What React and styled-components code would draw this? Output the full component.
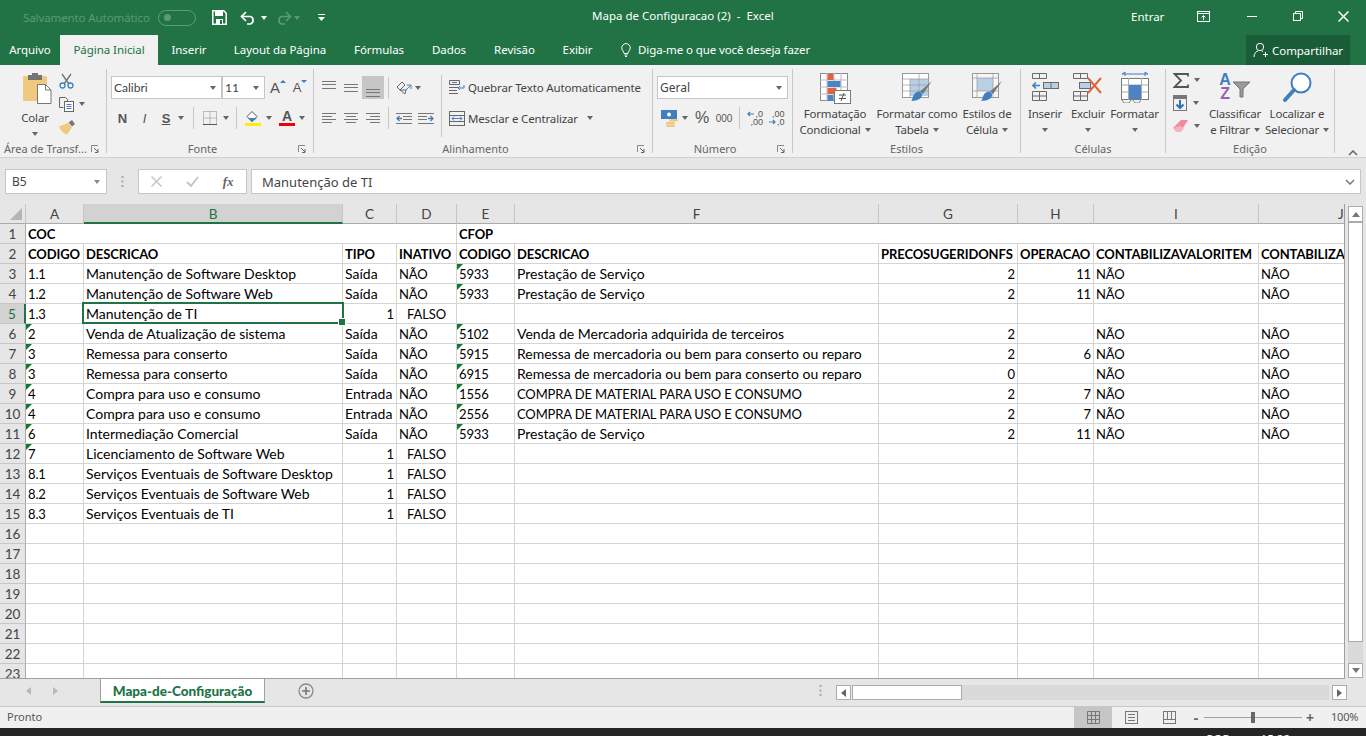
import React from 'react'
import styled, { createGlobalStyle } from 'styled-components'

const UI = '"Noto Sans", "Open Sans", sans-serif'
const CELL = 'Lato, "Liberation Sans", sans-serif'
const GREEN = '#217346'

const GlobalStyle = createGlobalStyle`
  html, body { margin: 0; padding: 0; height: 100%; overflow: hidden; }
  body { font-family: ${UI}; background: #e6e6e6; }
  * { box-sizing: border-box; }
`

const Page = styled.div`
  width: 1366px;
  height: 736px;
  display: flex;
  flex-direction: column;
  overflow: hidden;
`

/* title bar */
const TitleBar = styled.div`
  height: 35px;
  flex: none;
  background: ${GREEN};
  color: #fff;
  font-size: 11.5px;
  display: flex;
  align-items: center;
  position: relative;
`
const AutoSave = styled.span`
  margin-left: 23px;
  width: 135px;
  color: #5b9a79;
  letter-spacing: -0.1px;
`
const Toggle = styled.span`
  width: 38px;
  height: 16px;
  border: 1px solid #5b9a79;
  border-radius: 8px;
  margin-right: 16px;
  display: flex;
  align-items: center;
  padding-left: 5px;
  &::before {
    content: '';
    width: 7px;
    height: 7px;
    border-radius: 50%;
    background: #5b9a79;
  }
`
const Qat = styled.span`
  width: ${p => p.$w}px;
  flex: none;
  display: flex;
  align-items: center;
  gap: ${p => p.$gap ?? 0}px;
`
const DocTitle = styled.span`
  position: absolute;
  left: 592px;
  top: 8px;
  white-space: pre;
  line-height: 16px;
  font-size: 11.5px;
`
const WinArea = styled.div`
  margin-left: auto;
  display: flex;
  align-items: center;
  padding-bottom: 3px;
`
const SignIn = styled.span`
  width: 47px;
  font-size: 11.5px;
`
const WinBtn = styled.span`
  width: ${p => p.$w}px;
  display: flex;
  justify-content: center;
`

/* tab strip */
const TabStrip = styled.div`
  height: 30px;
  flex: none;
  background: ${GREEN};
  display: flex;
  align-items: stretch;
  color: #fff;
  font-size: 11.5px;
`
const Tab = styled.div`
  width: ${p => p.$w}px;
  flex: none;
  display: flex;
  align-items: center;
  justify-content: center;
  background: ${p => (p.$active ? '#f1f1f1' : 'transparent')};
  color: ${p => (p.$active ? GREEN : '#fff')};
  white-space: nowrap;
  padding-bottom: 1px;
  letter-spacing: -0.05px;
`
const TellMe = styled.div`
  margin-left: 15px;
  display: flex;
  align-items: center;
  gap: 7px;
  padding-bottom: 1px;
  letter-spacing: -0.1px;
`
const Share = styled.div`
  margin-left: auto;
  margin-right: 16px;
  width: 104px;
  background: #1a5c38;
  display: flex;
  align-items: center;
  padding-left: 7px;
  gap: 3px;
  letter-spacing: -0.05px;
`

/* ribbon */
const Ribbon = styled.div`
  height: 93px;
  flex: none;
  background: #f1f1f1;
  border-bottom: 1px solid #d0d0d0;
  padding: 4px 0 0;
  display: flex;
  color: #444;
  font-size: 11.5px;
`
const Group = styled.section`
  width: ${p => p.$w}px;
  height: 84px;
  flex: none;
  display: flex;
  flex-direction: column;
  border-right: 1px solid #c8c8c8;
`
const GroupBody = styled.div`
  flex: 1;
  min-height: 0;
  display: flex;
  padding-left: ${p => p.$pl ?? 0}px;
`
const GroupFoot = styled.div`
  height: 12px;
  flex: none;
  display: flex;
  color: #666;
  font-size: 11px;
  line-height: 16px;
`
const FootText = styled.span`
  flex: 1;
  text-align: center;
  white-space: nowrap;
`
const Launcher = styled.span`
  width: 15px;
  flex: none;
  padding-top: 4px;
  display: flex;
`
const Column = styled.div`
  display: flex;
  flex-direction: column;
  width: ${p => (p.$w ? `${p.$w}px` : 'auto')};
  padding-top: ${p => p.$pt ?? 0}px;
  margin-left: ${p => p.$ml ?? 0}px;
  flex: none;
`
const Row = styled.div`
  height: ${p => p.$h}px;
  margin-top: ${p => p.$mt ?? 0}px;
  display: flex;
  align-items: center;
  flex: none;
`
const Slot = styled.span`
  width: ${p => p.$w}px;
  height: 100%;
  flex: none;
  display: flex;
  align-items: center;
  justify-content: center;
  gap: ${p => p.$gap ?? 0}px;
  background: ${p => (p.$on ? '#c6c6c6' : 'transparent')};
`
const Caret = styled.i`
  display: inline-block;
  flex: none;
  width: 0;
  height: 0;
  border-left: 3.5px solid transparent;
  border-right: 3.5px solid transparent;
  border-top: 4px solid ${p => p.$c ?? '#666'};
`
const Sep = styled.span`
  width: 1px;
  height: ${p => p.$h ?? 22}px;
  background: #c8c8c8;
  flex: none;
  margin: ${p => p.$mt ?? 0}px ${p => p.$mr ?? p.$m ?? 0}px 0 ${p => p.$m ?? 0}px;
`
const Combo = styled.div`
  width: ${p => p.$w}px;
  height: 23px;
  flex: none;
  background: #fff;
  border: 1px solid #c6c6c6;
  display: flex;
  align-items: center;
  justify-content: space-between;
  padding: 0 5px 0 2px;
  font-family: ${p => (p.$cell ? CELL : UI)};
  font-size: 12px;
  color: #444;
`
const StyleLetter = styled.span`
  font-family: "Liberation Sans", sans-serif;
  font-weight: ${p => p.$w ?? 700};
  font-style: ${p => (p.$i ? 'italic' : 'normal')};
  text-decoration: ${p => (p.$u ? 'underline' : 'none')};
  font-size: ${p => p.$s ?? 13}px;
  color: #555;
`
const GrowMark = styled.i`
  align-self: flex-start;
  margin-top: 4px;
  flex: none;
  width: 0;
  height: 0;
  border-left: 3px solid transparent;
  border-right: 3px solid transparent;
  border-${p => (p.$up ? 'bottom' : 'top')}: 3px solid #3f7fc1;
`
const ColorGlyph = styled.span`
  width: 16px;
  flex: none;
  display: flex;
  flex-direction: column;
  align-items: center;
  font-family: "Liberation Sans", sans-serif;
  font-weight: 700;
  font-size: 14px;
  line-height: 12px;
  color: #555;
  &::after {
    content: '';
    width: 16px;
    height: 3px;
    margin-top: 1px;
    background: ${p => p.$bar};
  }
`
const DecimalBox = styled.span`
  width: 17px;
  display: grid;
  grid-auto-rows: 8px;
  font-family: "Liberation Sans", sans-serif;
  font-size: 9px;
  line-height: 8px;
  color: #555;
`
const DecimalLine = styled.span`
  display: flex;
  align-items: center;
  justify-content: flex-end;
  gap: 1px;
`
const TextAction = styled.span`
  margin-left: 3px;
  white-space: nowrap;
  letter-spacing: -0.15px;
`
const LargeBtn = styled.div`
  width: ${p => p.$w}px;
  flex: none;
  display: flex;
  flex-direction: column;
  align-items: center;
  text-align: center;
  line-height: 16px;
  white-space: nowrap;
  letter-spacing: -0.2px;
`
const LargeIcon = styled.span`
  height: ${p => p.$h ?? 37}px;
  display: flex;
  align-items: flex-start;
  padding-top: ${p => p.$pt ?? 4}px;
  padding-left: ${p => p.$pl ?? 0}px;
`
const BtnLine = styled.span`
  height: 16px;
  display: flex;
  align-items: center;
  gap: 4px;
`
const SortLetters = styled.span`
  display: flex;
  flex-direction: column;
  font-family: "Liberation Sans", sans-serif;
  font-weight: 700;
  font-size: 16px;
  line-height: 14px;
  color: #3f7fc1;
`
const SortZ = styled.span`
  color: #9a5fb5;
`
const Funnel = styled.svg`
  margin-top: 8px;
  margin-left: 1px;
`
const Collapse = styled.div`
  flex: 1;
  display: flex;
  align-items: flex-end;
  padding: 0 0 1px 13px;
`

/* formula bar */
const FormulaBar = styled.div`
  height: 46px;
  flex: none;
  background: #e6e6e6;
  padding: 11px 5px 0;
  display: flex;
  align-items: flex-start;
`
const NameBox = styled.div`
  width: 102px;
  height: 25px;
  background: #fff;
  border: 1px solid #c6c6c6;
  display: flex;
  align-items: center;
  justify-content: space-between;
  padding: 0 6px;
  font-size: 12px;
  color: #444;
`
const Grip = styled.span`
  width: 31px;
  height: 25px;
  display: flex;
  align-items: center;
  justify-content: center;
`
const FxBox = styled.div`
  width: 109px;
  height: 25px;
  background: #fff;
  border: 1px solid #c6c6c6;
  margin-right: 4px;
  display: flex;
  align-items: center;
`
const FxSlot = styled.span`
  width: 36px;
  display: flex;
  justify-content: center;
  font-family: "Liberation Serif", serif;
  font-style: italic;
  font-weight: 700;
  font-size: 13px;
  color: #666;
`
const FormulaInput = styled.div`
  flex: 1;
  height: 25px;
  background: #fff;
  border: 1px solid #c6c6c6;
  display: flex;
  align-items: center;
  justify-content: space-between;
  padding: 0 5px 0 10px;
  font-size: 13px;
  color: #444;
`

/* sheet */
const SheetArea = styled.div`
  height: 475px;
  flex: none;
  display: flex;
  background: #e6e6e6;
`
const SheetGrid = styled.div`
  width: 1345px;
  height: 475px;
  flex: none;
  overflow: hidden;
  display: grid;
  grid-template-columns: 26px 58px 259px 54px 60px 58px 364px 139px 76px 165px 86px;
  grid-auto-rows: 20px;
  background: #fff;
  border-right: 1px solid #9f9f9f;
  border-bottom: 1px solid #9f9f9f;
`
const Corner = styled.div`
  background: #e6e6e6;
  border-right: 1px solid #c6c6c6;
  border-bottom: 1px solid #ababab;
  display: flex;
  align-items: flex-end;
  justify-content: flex-end;
  padding: 0 3px 3px 0;
  &::after {
    content: '';
    border-left: 12px solid transparent;
    border-bottom: 12px solid #b5b5b5;
  }
`
const ColHead = styled.div`
  background: ${p => (p.$on ? '#d2d2d2' : '#e6e6e6')};
  color: ${p => (p.$on ? GREEN : '#444')};
  border-right: 1px solid #c6c6c6;
  border-bottom: ${p => (p.$on ? `2px solid ${GREEN}` : '1px solid #ababab')};
  font-family: ${CELL};
  font-size: 13.5px;
  line-height: 19px;
  padding-top: 1px;
  text-align: ${p => (p.$clip ? 'left' : 'center')};
  padding-left: ${p => (p.$clip ? 79 : 0)}px;
  overflow: hidden;
`
const RowHead = styled.div`
  background: ${p => (p.$on ? '#d2d2d2' : '#e6e6e6')};
  color: ${p => (p.$on ? GREEN : '#444')};
  border-right: ${p => (p.$on ? `2px solid ${GREEN}` : '1px solid #ababab')};
  border-bottom: 1px solid #c6c6c6;
  font-family: ${CELL};
  font-size: 13.5px;
  line-height: 19px;
  padding-top: 1px;
  text-align: center;
`
const Cell = styled.div`
  grid-column: span ${p => p.$span ?? 1};
  position: relative;
  border-right: 1px solid #d4d4d4;
  border-bottom: 1px solid #d4d4d4;
  font-family: ${CELL};
  font-size: ${p => (p.$bold || p.$dense ? 13 : 14)}px;
  font-weight: ${p => (p.$bold ? 700 : 400)};
  letter-spacing: ${p => (p.$bold ? -0.1 : p.$dense ? -0.13 : 0)}px;
  line-height: 19px;
  color: #000;
  padding: ${p => (p.$bold || p.$dense ? 1 : 0)}px 2px 0;
  text-align: ${p => p.$align ?? 'left'};
  white-space: nowrap;
  overflow: ${p => (p.$sel ? 'visible' : 'hidden')};
  z-index: ${p => (p.$sel ? 2 : 'auto')};
  ${p => p.$sel && `
    &::before {
      content: '';
      position: absolute;
      inset: -2px -2px -1px -2px;
      border: 2px solid ${GREEN};
    }
    &::after {
      content: '';
      position: absolute;
      right: -4px;
      bottom: -3px;
      width: 6px;
      height: 6px;
      background: ${GREEN};
      border: 1px solid #fff;
    }
  `}
`
const Flag = styled.i`
  position: absolute;
  left: 0;
  top: 0;
  width: 0;
  height: 0;
  border-top: 6px solid #0f7a2c;
  border-right: 6px solid transparent;
`
const VScroll = styled.div`
  width: 21px;
  height: 474px;
  flex: none;
  padding: 2px 3px 0 3px;
  display: flex;
  flex-direction: column;
`
const ScrollBtn = styled.div`
  width: ${p => p.$w ?? 15}px;
  height: ${p => p.$h ?? 16}px;
  flex: none;
  background: #fff;
  border: 1px solid #ababab;
  display: flex;
  align-items: center;
  justify-content: center;
`
const VThumb = styled.div`
  height: 420px;
  flex: none;
  background: #fff;
  border: 1px solid #ababab;
`
const VTrack = styled.div`
  flex: 1;
  background: #dadada;
`

/* sheet tabs */
const TabBar = styled.div`
  height: 27px;
  flex: none;
  background: #e6e6e6;
  display: flex;
  align-items: flex-start;
`
const NavArrows = styled.div`
  width: 100px;
  height: 23px;
  display: flex;
  align-items: center;
  padding-left: 26px;
  gap: 22px;
`
const SheetTab = styled.div`
  width: 165px;
  height: 24px;
  background: #fff;
  border-left: 1px solid #9f9f9f;
  border-right: 1px solid #9f9f9f;
  border-bottom: 2px solid ${GREEN};
  color: ${GREEN};
  font-family: ${CELL};
  font-weight: 900;
  font-size: 13.5px;
  text-align: center;
  line-height: 24px;
`
const AddSheet = styled.span`
  margin-left: 33px;
  height: 23px;
  display: flex;
  align-items: center;
`
const HGrip = styled.span`
  margin-left: 505px;
  width: 13px;
  height: 23px;
  display: flex;
  align-items: center;
`
const HScroll = styled.div`
  width: 511px;
  height: 15px;
  margin-top: 6px;
  margin-left: 4px;
  display: flex;
`
const HThumb = styled.div`
  width: 110px;
  background: #fff;
  border: 1px solid #ababab;
  margin-left: 1px;
`
const HTrack = styled.div`
  flex: 1;
  background: #dadada;
  margin-right: 3px;
`

/* status bar */
const StatusBar = styled.div`
  height: 22px;
  flex: none;
  background: #f0f0f0;
  border-top: 1px solid #c6c6c6;
  display: flex;
  align-items: stretch;
  color: #555;
  font-size: 11px;
`
const Ready = styled.span`
  margin-left: 7px;
  line-height: 20px;
  width: 1067px;
`
const ViewBtn = styled.span`
  width: 38px;
  flex: none;
  display: flex;
  align-items: center;
  justify-content: center;
  background: ${p => (p.$on ? '#c6c6c6' : 'transparent')};
`
const Zoomer = styled.div`
  width: 124px;
  display: flex;
  align-items: center;
  margin-left: 3px;
  gap: 3px;
`
const ZoomSign = styled.span`
  width: 10px;
  text-align: center;
  font-weight: 700;
  font-size: 14px;
  line-height: 20px;
  color: #666;
`
const ZoomTrack = styled.span`
  width: 100px;
  height: 1px;
  background: #a0a0a0;
  display: flex;
  justify-content: center;
  align-items: center;
  &::after {
    content: '';
    width: 4px;
    height: 11px;
    background: #666;
  }
`
const ZoomLabel = styled.span`
  margin-left: 16px;
  line-height: 20px;
  letter-spacing: -0.2px;
`
const TaskBar = styled.div`
  height: 8px;
  flex: none;
  background: #252525;
  color: #fff;
  overflow: hidden;
  display: flex;
  justify-content: flex-end;
  font-size: 11.5px;
  line-height: 16px;
  padding: 3px 76px 0 0;
  gap: 31px;
`

/* icons */
const Svg = ({ w, h, children, ...rest }) => (
  <svg width={w} height={h} viewBox={`0 0 ${w} ${h}`} fill="none" {...rest}>{children}</svg>
)

const LauncherIcon = () => (
  <Svg w={8} h={8}>
    <path d="M.5 7V.5H7" stroke="#888" />
    <path d="M3 3l4 4M7 4v3.500H4" stroke="#666" />
  </Svg>
)

const SaveIcon = () => (
  <Svg w={15} h={15}>
    <path d="M.8.8h11l2.400 2.400v11H.8z" stroke="#fff" strokeWidth="1.500" />
    <rect x="3" y="1" width="8" height="5" fill="#fff" />
    <rect x="4" y="9" width="7" height="5" fill="#fff" />
    <rect x="8" y="10" width="2" height="4" fill={GREEN} />
  </Svg>
)
const UndoIcon = ({ c = '#fff', flip }) => (
  <Svg w={16} h={14} style={flip ? { transform: 'scaleX(-1)' } : undefined}>
    <path d="M1.500 5.500h9a4 4 0 0 1 0 7.500H7" stroke={c} strokeWidth="1.700" />
    <path d="M6 1L1.500 5.500 6 10" stroke={c} strokeWidth="1.700" />
  </Svg>
)
const QatMore = () => (
  <Svg w={7} h={8}>
    <path d="M0 .5h7" stroke="#fff" />
    <path d="M0 3h7L3.500 7z" fill="#fff" />
  </Svg>
)
const RibbonDisplay = () => (
  <Svg w={13} h={11}>
    <rect x=".5" y=".5" width="12" height="10" stroke="#fff" />
    <path d="M0 2.500h13M6.500 9V4.500M4.500 6.500l2-2 2 2" stroke="#fff" />
  </Svg>
)
const Restore = () => (
  <Svg w={10} h={10}>
    <rect x=".5" y="2.500" width="7" height="7" stroke="#fff" />
    <path d="M2.500 2.500v-2h7v7h-2" stroke="#fff" />
  </Svg>
)
const Bulb = () => (
  <Svg w={10} h={14}>
    <path d="M3 10.500C3 8.500 .8 7.500.8 4.800a4.200 4.200 0 0 1 8.400 0C9.200 7.500 7 8.500 7 10.500z" stroke="#fff" />
    <path d="M3.500 12h3M4 13.500h2" stroke="#fff" />
  </Svg>
)
const Person = () => (
  <Svg w={16} h={16}>
    <circle cx="7" cy="5" r="3.700" stroke="#fff" />
    <path d="M1 15c0-3.500 2-5.500 4-6M9 9l1 .6" stroke="#fff" />
    <path d="M12.500 10v5M10 12.500h5" stroke="#fff" />
  </Svg>
)

const PasteIcon = () => (
  <Svg w={29} h={31}>
    <rect x="0" y="3" width="24" height="25" rx="1" fill="#efc97f" />
    <rect x="5" y="2" width="14" height="5" fill="#737373" />
    <rect x="9" y="0" width="6" height="3" fill="#737373" />
    <path d="M14.500 11.500h8l5.500 5.500v13.500H14.500z" fill="#fff" stroke="#777" />
    <path d="M22.500 11.500V17H28" stroke="#777" />
  </Svg>
)
const Scissors = () => (
  <Svg w={15} h={16}>
    <path d="M3 1l7 10M12 1L5 11" stroke="#777" strokeWidth="1.400" />
    <circle cx="3.500" cy="12.500" r="2.500" stroke="#3f7fc1" strokeWidth="1.300" />
    <circle cx="11.500" cy="12.500" r="2.500" stroke="#3f7fc1" strokeWidth="1.300" />
  </Svg>
)
const CopyIcon = () => (
  <Svg w={16} h={15}>
    <path d="M.5.500h6l2 2v3M.5.500v10h4" stroke="#666" />
    <rect x="5.500" y="4.500" width="9" height="10" fill="#fff" stroke="#666" />
    <path d="M7.500 7.500h5M7.500 9.500h5M7.500 11.500h5" stroke="#3f7fc1" />
  </Svg>
)
const BrushIcon = () => (
  <Svg w={17} h={15}>
    <path d="M0 6.500L9 3l4 4.500-5 7C5 14 1 10 0 6.500z" fill="#efc97f" />
    <path d="M9.500 2.500L13 6.500 16 4 13 0z" fill="#777" />
  </Svg>
)
const GrowFont = ({ up }) => (
  <Slot $w={up ? 26 : 18}>
    <StyleLetter $w={400} $s={up ? 15 : 13}>A</StyleLetter>
    <GrowMark $up={up} />
  </Slot>
)
const BordersIcon = () => (
  <Svg w={14} h={14}>
    <path d="M.5.500h13v13H.5zM7 .5v13M.5 7h13" stroke="#888" strokeDasharray="1 1" />
    <path d="M0 13.500h14" stroke="#555" />
  </Svg>
)
const FillIcon = () => (
  <Svg w={16} h={15}>
    <path d="M7 .5l5 5-5 5-5-5z" fill="#fff" stroke="#555" />
    <path d="M3 7h9l-5 4z" fill="#3f7fc1" />
    <rect x="0" y="12" width="16" height="3" fill="#ffee00" />
  </Svg>
)
const VAlign = ({ offset }) => (
  <Svg w={14} h={20}>
    {[0, 3, 7].map(d => <path key={d} d={`M0 ${offset + d + 0.5}h14`} stroke="#777" />)}
  </Svg>
)
const HAlign = ({ kind }) => {
  const rows = [14, 10, 14, 10]
  return (
    <Svg w={14} h={11}>
      {rows.map((w, i) => {
        const x = kind === 'left' ? 0 : kind === 'center' ? (14 - w) / 2 : 14 - w
        return <path key={i} d={`M${x} ${i * 3 + 0.5}h${w}`} stroke="#777" />
      })}
    </Svg>
  )
}
const Orientation = () => (
  <Svg w={16} h={15}>
    <path d="M1 7l5-5 3 3-5 5zM4 10l5 4 1-4z" stroke="#666" />
    <path d="M9 11l5-5M11 5h4v4" stroke="#3f7fc1" />
  </Svg>
)
const IndentIcon = ({ dir }) => (
  <Svg w={16} h={11} style={dir ? { transform: 'scaleX(-1)' } : undefined}>
    <path d="M0 .5h16M7 3.500h9M7 6.500h9M0 10.500h16" stroke="#777" />
    <path d="M6 5.500H1M3.500 3L1 5.500 3.500 8" stroke="#3f7fc1" strokeWidth="1.300" />
  </Svg>
)
const WrapIcon = () => (
  <Svg w={16} h={15}>
    <path d="M.5.500h10v4H.5zM0 7.500h10M0 10.500h8M0 13.500h9" stroke="#666" />
    <path d="M3 2.500h5" stroke="#3f7fc1" />
    <path d="M15 5v3h-6M11 6L9 8l2 2" stroke="#3f7fc1" />
  </Svg>
)
const MergeIcon = () => (
  <Svg w={16} h={15}>
    <rect x=".5" y=".5" width="15" height="14" stroke="#666" />
    <path d="M0 4.500h16M0 10.500h16" stroke="#666" />
    <path d="M3 7.500h10M5 5.500l-2 2 2 2M11 5.500l2 2-2 2" stroke="#3f7fc1" />
  </Svg>
)
const Currency = () => (
  <Svg w={17} h={17}>
    <rect x="0" y="0" width="16" height="9" fill="#3f7fc1" />
    <circle cx="8" cy="4.500" r="2" fill="#fff" />
    <rect x="8" y="9" width="9" height="2.500" rx="1" fill="#efc97f" />
    <rect x="5" y="12" width="9" height="2.500" rx="1" fill="#efc97f" />
    <rect x="5" y="15" width="9" height="2" rx="1" fill="#efc97f" />
  </Svg>
)
const DecArrow = ({ right }) => (
  <Svg w={7} h={6} style={right ? { transform: 'scaleX(-1)' } : undefined}>
    <path d="M7 3H1M3 1L1 3l2 2" stroke="#3f7fc1" strokeWidth="1.200" />
  </Svg>
)
const CondFormat = () => (
  <Svg w={31} h={31}>
    <rect x=".5" y=".5" width="27" height="27" fill="#fff" stroke="#8a8a8a" />
    <path d="M7 0v28M14 0v28M21 0v28M0 7h28M0 14h28M0 21h28" stroke="#bbb" />
    <rect x="7.500" y="1" width="6" height="6" fill="#e0623f" />
    <rect x="7.500" y="8" width="13" height="6" fill="#4a84c4" />
    <rect x="7.500" y="15" width="9" height="6" fill="#e0623f" />
    <rect x="7.500" y="22" width="6" height="6" fill="#4a84c4" />
    <rect x="14.500" y="17.500" width="16" height="13" fill="#fff" stroke="#777" />
    <path d="M19 22h7M19 25.500h7M24 20l-3 8" stroke="#555" />
  </Svg>
)
const TableBrush = ({ plain }) => (
  <Svg w={31} h={30}>
    <rect x=".5" y=".5" width="26" height="24" fill={plain ? '#f6f6f6' : '#fff'} stroke="#9a9a9a" />
    <rect x={plain ? 5 : 8} y={plain ? 5 : 6} width={plain ? 16 : 18} height={plain ? 13 : 17} fill="#b9cfe6" />
    {!plain && <path d="M8 6v18M17 1v23M1 6h25M1 12h25M1 18h25" stroke="#9a9a9a" strokeWidth=".7" />}
    {plain && <path d="M5 1v24M21 1v24M1 5h25M1 18h25" stroke="#9a9a9a" strokeWidth=".7" />}
    <path d="M30 8L21 21l-3-2.500z" fill="#777" />
    <path d="M9 28c2-1 1-7 6-9 2-1 4 0 5 2 1 4-4 7-11 7z" fill="#3f7fc1" />
  </Svg>
)
const InsertIcon = () => (
  <Svg w={27} h={28}>
    <path d="M.5.500h14v5H.5zM7.500 .5v5M.5 18.500h14v9H.5zM.5 23h14M7.500 18.500v9" stroke="#6a6a6a" />
    <rect x="11.500" y="9.500" width="15" height="6" fill="#b9cfe6" stroke="#6a6a6a" />
    <path d="M19 9.500v6" stroke="#6a6a6a" />
    <path d="M8 12.500H1M4 9.500l-3 3 3 3" stroke="#3f7fc1" strokeWidth="1.600" />
  </Svg>
)
const DeleteIcon = () => (
  <Svg w={30} h={28}>
    <path d="M.5.500h14v5H.5zM7.500 .5v5M.5 18.500h14v9H.5zM.5 23h14M7.500 18.500v9" stroke="#6a6a6a" />
    <rect x="6.500" y="9.500" width="11" height="6" fill="#b9cfe6" stroke="#6a6a6a" />
    <path d="M15 5l13 15M28 5L15 20" stroke="#e0623f" strokeWidth="2" />
  </Svg>
)
const FormatCells = () => (
  <Svg w={28} h={32}>
    <path d="M1 3h26M1 3l3-2v4M27 3l-3-2v4" stroke="#3f7fc1" />
    <rect x=".5" y="7.500" width="27" height="21" fill="#fff" stroke="#7a7a7a" />
    <path d="M7.500 7v22M20.500 7v22M.5 14h27M.5 21h27" stroke="#aaa" />
    <rect x="8" y="14" width="12" height="14" fill="#4a84c4" />
    <path d="M1 29l2 3h5l2-3M12 29l2 3h4l2-3" stroke="#888" />
  </Svg>
)
const Sigma = () => (
  <Svg w={16} h={15}>
    <path d="M15 3.500V1H1.500L8 7.500 1.500 14H15v-2.500" stroke="#555" strokeWidth="1.800" />
  </Svg>
)
const FillDown = () => (
  <Svg w={14} h={16}>
    <rect x="0" y="0" width="14" height="4" fill="#777" />
    <rect x=".5" y=".5" width="13" height="15" stroke="#777" />
    <path d="M7 5v8M3.500 9.500L7 13l3.500-3.500" stroke="#2f72b8" strokeWidth="2" />
  </Svg>
)
const Eraser = () => (
  <Svg w={16} h={12}>
    <path d="M0 8l8-8h7L8 11H4z" fill="#f08a9c" />
    <path d="M0 8l3 4h5l3-4-4-2z" fill="#f5b5bf" />
  </Svg>
)
const SearchIcon = () => (
  <Svg w={29} h={31}>
    <circle cx="18" cy="11" r="9.500" fill="#fff" stroke="#3f7fc1" strokeWidth="2" />
    <path d="M11 18L2 28" stroke="#3f7fc1" strokeWidth="4" strokeLinecap="round" />
  </Svg>
)
const ChevronUp = () => (
  <Svg w={10} h={6}>
    <path d="M1 5l4-4 4 4" stroke="#666" strokeWidth="1.500" />
  </Svg>
)
const Cross = ({ c }) => (
  <Svg w={11} h={11}>
    <path d="M.5.5l10 10M10.500.5l-10 10" stroke={c} strokeWidth="1.500" />
  </Svg>
)
const Check = () => (
  <Svg w={13} h={11}>
    <path d="M1 6l4 4 7-9" stroke="#c6c6c6" strokeWidth="2" />
  </Svg>
)
const Dots = () => (
  <Svg w={3} h={11}>
    <path d="M1.500 0v2M1.500 4.500v2M1.500 9v2" stroke="#a8a8a8" strokeWidth="2" />
  </Svg>
)
const TriLeft = ({ c = '#b8b8b8' }) => <Svg w={5} h={8}><path d="M5 0v8L0 4z" fill={c} /></Svg>
const TriRight = ({ c = '#b8b8b8' }) => <Svg w={5} h={8}><path d="M0 0v8l5-4z" fill={c} /></Svg>
const PlusCircle = () => (
  <Svg w={16} h={16}>
    <circle cx="8" cy="8" r="7" stroke="#8a8a8a" strokeWidth="1.300" />
    <path d="M8 4v8M4 8h8" stroke="#777" strokeWidth="1.600" />
  </Svg>
)
const NormalView = () => (
  <Svg w={13} h={13}>
    <path d="M.5.500h12v12H.5zM4.500 .5v12M8.500 .5v12M.5 4.500h12M.5 8.500h12" stroke="#777" />
  </Svg>
)
const PageView = () => (
  <Svg w={13} h={13}>
    <rect x=".5" y=".5" width="12" height="12" stroke="#777" />
    <path d="M3 3.500h7M3 6.500h7M3 9.500h7" stroke="#777" />
  </Svg>
)
const BreakView = () => (
  <Svg w={13} h={13}>
    <rect x=".5" y=".5" width="12" height="12" stroke="#777" />
    <path d="M.5 8.500h12M4.500 .5v8M8.500 .5v8" stroke="#777" />
  </Svg>
)

const COLUMNS = ['A', 'B', 'C', 'D', 'E', 'F', 'G', 'H', 'I']
const HEADERS = ['CODIGO', 'DESCRICAO', 'TIPO', 'INATIVO', 'CODIGO', 'DESCRICAO', 'PRECOSUGERIDONFS', 'OPERACAO', 'CONTABILIZAVALORITEM', 'CONTABILIZA']
const SERVICE = 'Prestação de Serviço'
const REPAIR = 'Remessa de mercadoria ou bem para conserto ou reparo'
const PURCHASE = 'COMPRA DE MATERIAL PARA USO E CONSUMO'
const DATA = [
  ['1.1', 'Manutenção de Software Desktop', 'Saída', 'NÃO', '5933', SERVICE, 2, 11, 'NÃO', 'NÃO'],
  ['1.2', 'Manutenção de Software Web', 'Saída', 'NÃO', '5933', SERVICE, 2, 11, 'NÃO', 'NÃO'],
  ['1.3', 'Manutenção de TI', 1, 'FALSO', '', '', '', '', '', ''],
  ['2', 'Venda de Atualização de sistema', 'Saída', 'NÃO', '5102', 'Venda de Mercadoria adquirida de terceiros', 2, '', 'NÃO', 'NÃO'],
  ['3', 'Remessa para conserto', 'Saída', 'NÃO', '5915', REPAIR, 2, 6, 'NÃO', 'NÃO'],
  ['3', 'Remessa para conserto', 'Saída', 'NÃO', '6915', REPAIR, 0, '', 'NÃO', 'NÃO'],
  ['4', 'Compra para uso e consumo', 'Entrada', 'NÃO', '1556', PURCHASE, 2, 7, 'NÃO', 'NÃO'],
  ['4', 'Compra para uso e consumo', 'Entrada', 'NÃO', '2556', PURCHASE, 2, 7, 'NÃO', 'NÃO'],
  ['6', 'Intermediação Comercial', 'Saída', 'NÃO', '5933', SERVICE, 2, 11, 'NÃO', 'NÃO'],
  ['7', 'Licenciamento de Software Web', 1, 'FALSO', '', '', '', '', '', ''],
  ['8.1', 'Serviços Eventuais de Software Desktop', 1, 'FALSO', '', '', '', '', '', ''],
  ['8.2', 'Serviços Eventuais de Software Web', 1, 'FALSO', '', '', '', '', '', ''],
  ['8.3', 'Serviços Eventuais de TI', 1, 'FALSO', '', '', '', '', '', ''],
]
const EMPTY_ROW = Array(10).fill('')
const ROWS = [...DATA, ...Array(8).fill(EMPTY_ROW)]

const alignOf = v => (typeof v === 'number' ? 'right' : v === 'FALSO' ? 'center' : 'left')
const hasFlag = (v, col) => (col === 0 && /^[0-9]$/.test(v)) || (col === 4 && v !== '')
// Lato runs wide on capitals and digits compared with what the sheet shows
const isDense = v => !/[a-z]/.test(String(v))

const Sheet = () => (
  <SheetGrid>
    <Corner />
    {COLUMNS.map(c => <ColHead key={c} $on={c === 'B'}>{c}</ColHead>)}
    <ColHead $clip>J</ColHead>

    <RowHead>1</RowHead>
    <Cell $span={4} $bold>COC</Cell>
    <Cell $span={6} $bold>CFOP</Cell>

    <RowHead>2</RowHead>
    {HEADERS.map((h, i) => <Cell key={i} $bold>{h}</Cell>)}

    {ROWS.map((row, r) => (
      <React.Fragment key={r}>
        <RowHead $on={r === 2}>{r + 3}</RowHead>
        {row.map((v, c) => (
          <Cell key={c} $align={alignOf(v)} $dense={isDense(v)} $sel={r === 2 && c === 1}>
            {hasFlag(v, c) && <Flag />}
            {v}
          </Cell>
        ))}
      </React.Fragment>
    ))}
  </SheetGrid>
)

const App = () => (
  <Page>
    <GlobalStyle />
    <TitleBar>
      <AutoSave>Salvamento Automático</AutoSave>
      <Toggle />
      <Qat $w={28}><SaveIcon /></Qat>
      <Qat $w={36} $gap={5}><UndoIcon /><Caret $c="#fff" /></Qat>
      <Qat $w={42} $gap={2}><UndoIcon c="#5b9a79" flip /><Caret $c="#5b9a79" /></Qat>
      <QatMore />
      <DocTitle>Mapa de Configuracao (2)  -  Excel</DocTitle>
      <WinArea>
        <SignIn>Entrar</SignIn>
        <WinBtn $w={51}><RibbonDisplay /></WinBtn>
        <WinBtn $w={46}><Svg w={10} h={1}><path d="M0 .5h10" stroke="#fff" /></Svg></WinBtn>
        <WinBtn $w={45}><Restore /></WinBtn>
        <WinBtn $w={46}><Cross c="#fff" /></WinBtn>
      </WinArea>
    </TitleBar>

    <TabStrip>
      <Tab $w={60}>Arquivo</Tab>
      <Tab $w={98} $active>Página Inicial</Tab>
      <Tab $w={62}>Inserir</Tab>
      <Tab $w={120}>Layout da Página</Tab>
      <Tab $w={78}>Fórmulas</Tab>
      <Tab $w={62}>Dados</Tab>
      <Tab $w={69}>Revisão</Tab>
      <Tab $w={57}>Exibir</Tab>
      <TellMe><Bulb />Diga-me o que você deseja fazer</TellMe>
      <Share><Person />Compartilhar</Share>
    </TabStrip>

    <Ribbon>
      <Group $w={107}>
        <GroupBody $pl={9}>
          <LargeBtn $w={52}>
            <LargeIcon $pt={4} $pl={4} $h={45}><PasteIcon /></LargeIcon>
            <BtnLine>Colar</BtnLine>
            <BtnLine><Caret /></BtnLine>
          </LargeBtn>
          <Column $ml={-2}>
            <Row $h={23}><Scissors /></Row>
            <Row $h={24}><CopyIcon /><Slot $w={14}><Caret /></Slot></Row>
            <Row $h={22}><BrushIcon /></Row>
          </Column>
        </GroupBody>
        <GroupFoot>
          <FootText>Área de Transf...</FootText>
          <Launcher><LauncherIcon /></Launcher>
        </GroupFoot>
      </Group>

      <Group $w={207}>
        <GroupBody $pl={4}>
          <Column $pt={7}>
            <Row $h={23}>
              <Combo $w={111} $cell><span>Calibri</span><Caret /></Combo>
              <Combo $w={43} $cell><span>11</span><Caret /></Combo>
              <GrowFont up />
              <GrowFont />
            </Row>
            <Row $h={24} $mt={7}>
              <Slot $w={23}><StyleLetter>N</StyleLetter></Slot>
              <Slot $w={21}><StyleLetter $i $w={400}>I</StyleLetter></Slot>
              <Slot $w={36} $gap={8}><StyleLetter $u>S</StyleLetter><Caret /></Slot>
              <Sep $m={2} />
              <Slot $w={39} $gap={6}><BordersIcon /><Caret /></Slot>
              <Sep $m={1} />
              <Slot $w={40} $gap={5}><FillIcon /><Caret /></Slot>
              <Slot $w={28} $gap={4}><ColorGlyph $bar="#f00000">A</ColorGlyph><Caret /></Slot>
            </Row>
          </Column>
        </GroupBody>
        <GroupFoot>
          <FootText>Fonte</FootText>
          <Launcher><LauncherIcon /></Launcher>
        </GroupFoot>
      </Group>

      <Group $w={339}>
        <GroupBody $pl={4}>
          <Column $w={123} $pt={7}>
            <Row $h={23}>
              <Slot $w={22}><VAlign offset={3} /></Slot>
              <Slot $w={22}><VAlign offset={6} /></Slot>
              <Slot $w={22} $on><VAlign offset={11} /></Slot>
              <Sep $m={4} />
              <Slot $w={30} $gap={3}><Orientation /><Caret /></Slot>
            </Row>
            <Row $h={24} $mt={7}>
              <Slot $w={22}><HAlign kind="left" /></Slot>
              <Slot $w={22}><HAlign kind="center" /></Slot>
              <Slot $w={22}><HAlign kind="right" /></Slot>
              <Sep $m={4} />
              <Slot $w={22}><IndentIcon /></Slot>
              <Slot $w={22}><IndentIcon dir /></Slot>
            </Row>
          </Column>
          <Sep $h={62} $mt={6} $mr={7} />
          <Column $pt={7}>
            <Row $h={23}><WrapIcon /><TextAction>Quebrar Texto Automaticamente</TextAction></Row>
            <Row $h={24} $mt={7}><MergeIcon /><TextAction>Mesclar e Centralizar</TextAction><Slot $w={24}><Caret /></Slot></Row>
          </Column>
        </GroupBody>
        <GroupFoot>
          <FootText>Alinhamento</FootText>
          <Launcher><LauncherIcon /></Launcher>
        </GroupFoot>
      </Group>

      <Group $w={140}>
        <GroupBody $pl={4}>
          <Column $pt={7}>
            <Row $h={23}><Combo $w={131}><span>Geral</span><Caret /></Combo></Row>
            <Row $h={24} $mt={7}>
              <Slot $w={34} $gap={4}><Currency /><Caret /></Slot>
              <Slot $w={22}><StyleLetter $w={400} $s={16}>%</StyleLetter></Slot>
              <Slot $w={22}><StyleLetter $w={400} $s={10}>000</StyleLetter></Slot>
              <Sep $m={4} />
              <Slot $w={21}>
                <DecimalBox>
                  <DecimalLine><DecArrow />,0</DecimalLine>
                  <DecimalLine>,00</DecimalLine>
                </DecimalBox>
              </Slot>
              <Slot $w={22}>
                <DecimalBox>
                  <DecimalLine>,00</DecimalLine>
                  <DecimalLine><DecArrow right />,0</DecimalLine>
                </DecimalBox>
              </Slot>
            </Row>
          </Column>
        </GroupBody>
        <GroupFoot>
          <FootText>Número</FootText>
          <Launcher><LauncherIcon /></Launcher>
        </GroupFoot>
      </Group>

      <Group $w={228}>
        <GroupBody $pl={1}>
          <LargeBtn $w={82}>
            <LargeIcon><CondFormat /></LargeIcon>
            <BtnLine>Formatação</BtnLine>
            <BtnLine>Condicional<Caret /></BtnLine>
          </LargeBtn>
          <LargeBtn $w={82}>
            <LargeIcon><TableBrush /></LargeIcon>
            <BtnLine>Formatar como</BtnLine>
            <BtnLine>Tabela<Caret /></BtnLine>
          </LargeBtn>
          <LargeBtn $w={58}>
            <LargeIcon><TableBrush plain /></LargeIcon>
            <BtnLine>Estilos de</BtnLine>
            <BtnLine>Célula<Caret /></BtnLine>
          </LargeBtn>
        </GroupBody>
        <GroupFoot><FootText>Estilos</FootText></GroupFoot>
      </Group>

      <Group $w={145}>
        <GroupBody>
          <LargeBtn $w={48}>
            <LargeIcon><InsertIcon /></LargeIcon>
            <BtnLine>Inserir</BtnLine>
            <BtnLine><Caret /></BtnLine>
          </LargeBtn>
          <LargeBtn $w={38}>
            <LargeIcon><DeleteIcon /></LargeIcon>
            <BtnLine>Excluir</BtnLine>
            <BtnLine><Caret /></BtnLine>
          </LargeBtn>
          <LargeBtn $w={55}>
            <LargeIcon $pt={2}><FormatCells /></LargeIcon>
            <BtnLine>Formatar</BtnLine>
            <BtnLine><Caret /></BtnLine>
          </LargeBtn>
        </GroupBody>
        <GroupFoot><FootText>Células</FootText></GroupFoot>
      </Group>

      <Group $w={169}>
        <GroupBody $pl={7}>
          <Column $w={31}>
            <Row $h={22}><Sigma /><Slot $w={15}><Caret /></Slot></Row>
            <Row $h={24}><FillDown /><Slot $w={17}><Caret /></Slot></Row>
            <Row $h={21}><Eraser /><Slot $w={15}><Caret /></Slot></Row>
          </Column>
          <LargeBtn $w={62}>
            <LargeIcon>
              <SortLetters>A<SortZ>Z</SortZ></SortLetters>
              <Funnel width="19" height="17" viewBox="0 0 19 17" fill="none">
                <path d="M1 1h17l-7 7v8H8V8z" fill="#9a9a9a" stroke="#777" />
              </Funnel>
            </LargeIcon>
            <BtnLine>Classificar</BtnLine>
            <BtnLine>e Filtrar<Caret /></BtnLine>
          </LargeBtn>
          <LargeBtn $w={62}>
            <LargeIcon $pt={3}><SearchIcon /></LargeIcon>
            <BtnLine>Localizar e</BtnLine>
            <BtnLine>Selecionar<Caret /></BtnLine>
          </LargeBtn>
        </GroupBody>
        <GroupFoot><FootText>Edição</FootText></GroupFoot>
      </Group>

      <Collapse><ChevronUp /></Collapse>
    </Ribbon>

    <FormulaBar>
      <NameBox><span>B5</span><Caret $c="#888" /></NameBox>
      <Grip><Dots /></Grip>
      <FxBox>
        <FxSlot><Cross c="#c6c6c6" /></FxSlot>
        <FxSlot><Check /></FxSlot>
        <FxSlot>fx</FxSlot>
      </FxBox>
      <FormulaInput>
        <span>Manutenção de TI</span>
        <Svg w={10} h={6}><path d="M1 1l4 4 4-4" stroke="#777" strokeWidth="1.500" /></Svg>
      </FormulaInput>
    </FormulaBar>

    <SheetArea>
      <Sheet />
      <VScroll>
        <ScrollBtn><Svg w={8} h={5}><path d="M0 5h8L4 0z" fill="#777" /></Svg></ScrollBtn>
        <VThumb />
        <VTrack />
        <ScrollBtn $h={15}><Svg w={8} h={5}><path d="M0 0h8L4 5z" fill="#777" /></Svg></ScrollBtn>
      </VScroll>
    </SheetArea>

    <TabBar>
      <NavArrows><TriLeft /><TriRight /></NavArrows>
      <SheetTab>Mapa-de-Configuração</SheetTab>
      <AddSheet><PlusCircle /></AddSheet>
      <HGrip><Dots /></HGrip>
      <HScroll>
        <ScrollBtn $w={15} $h={15}><TriLeft c="#666" /></ScrollBtn>
        <HThumb />
        <HTrack />
        <ScrollBtn $w={15} $h={15}><TriRight c="#666" /></ScrollBtn>
      </HScroll>
    </TabBar>

    <StatusBar>
      <Ready>Pronto</Ready>
      <ViewBtn $on><NormalView /></ViewBtn>
      <ViewBtn><PageView /></ViewBtn>
      <ViewBtn><BreakView /></ViewBtn>
      <Zoomer>
        <ZoomSign>-</ZoomSign>
        <ZoomTrack />
        <ZoomSign>+</ZoomSign>
      </Zoomer>
      <ZoomLabel>100%</ZoomLabel>
    </StatusBar>

    <TaskBar><span>POR</span><span>15:22</span></TaskBar>
  </Page>
)

export default App
